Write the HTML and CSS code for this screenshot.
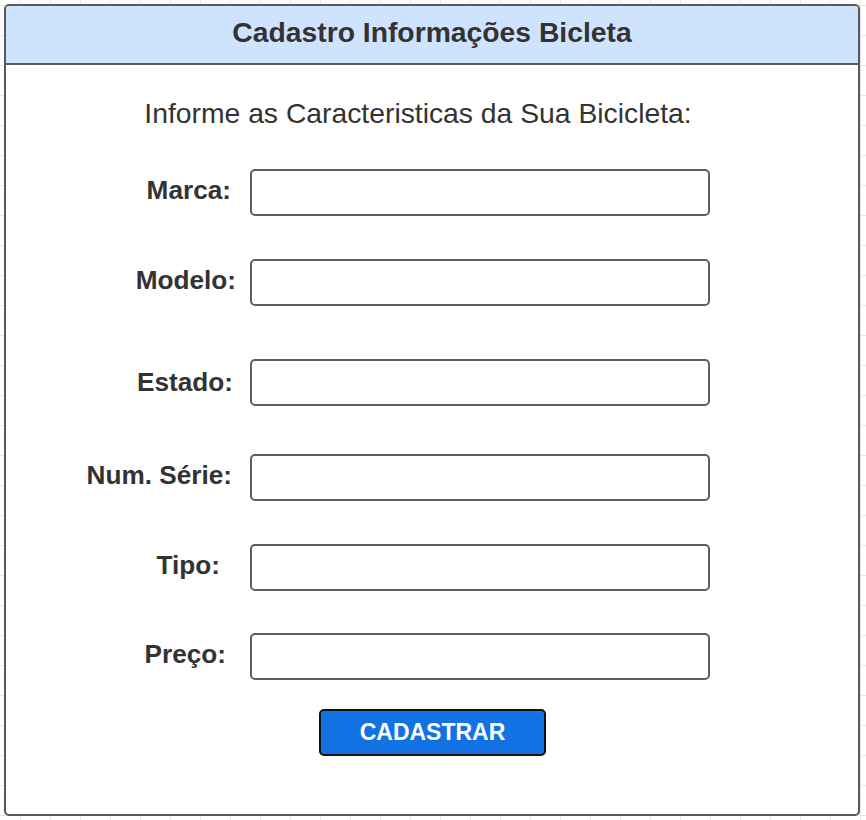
FILE: index.html
```html
<!DOCTYPE html>
<html lang="pt">
<head>
<meta charset="utf-8">
<title>Cadastro Informações Bicleta</title>
<link rel="stylesheet" href="styles.css">
</head>
<body>
  <div class="panel">
    <div class="panel-header">Cadastro Informações Bicleta</div>
    <div class="panel-body">
      <p class="subtitle">Informe as Caracteristicas da Sua Bicicleta:</p>
      <form class="form">
        <div class="row row-marca">
          <label class="label">Marca:</label>
          <input class="field" type="text">
        </div>
        <div class="row row-modelo">
          <label class="label">Modelo:</label>
          <input class="field" type="text">
        </div>
        <div class="row row-estado">
          <label class="label">Estado:</label>
          <input class="field" type="text">
        </div>
        <div class="row row-serie">
          <label class="label">Num. Série:</label>
          <input class="field" type="text">
        </div>
        <div class="row row-tipo">
          <label class="label">Tipo:</label>
          <input class="field" type="text">
        </div>
        <div class="row row-preco">
          <label class="label">Preço:</label>
          <input class="field" type="text">
        </div>
        <button class="submit" type="button">CADASTRAR</button>
      </form>
    </div>
  </div>
</body>
</html>
```
FILE: styles.css
```css
html, body {
  margin: 0;
  padding: 0;
  min-height: 100%;
}

body {
  width: 866px;
  height: 820px;
  overflow: hidden;
  background-color: #ffffff;
  background-image:
    linear-gradient(to right, #e8e8e8 1px, transparent 1px),
    linear-gradient(to bottom, #e8e8e8 1px, transparent 1px);
  background-size: 30px 30px;
  background-position: 20px 5px;
  font-family: "Liberation Sans", Arial, sans-serif;
  color: #333333;
}

.panel {
  box-sizing: border-box;
  margin: 4px 0 0 4px;
  width: 856px;
  height: 812px;
  border: 2px solid #595959;
  border-radius: 5px;
  background: #ffffff;
  display: flex;
  flex-direction: column;
  overflow: hidden;
}

.panel-header {
  box-sizing: border-box;
  height: 59px;
  flex: none;
  background: #cfe3ff;
  border-bottom: 2px solid #595959;
  display: flex;
  align-items: center;
  justify-content: center;
  font-weight: bold;
  font-size: 28.3px;
  color: #333333;
  padding-bottom: 4px;
}

.panel-body {
  display: flex;
  flex-direction: column;
}

.subtitle {
  margin: 31px 0 0 0;
  padding-right: 28px;
  text-align: center;
  font-size: 28.3px;
  line-height: 34px;
  color: #333333;
}

.form {
  display: flex;
  flex-direction: column;
  margin: 0;
}

.row {
  display: flex;
  align-items: center;
  gap: 14px;
  height: 46px;
  margin-top: 44px;
}

.label {
  box-sizing: border-box;
  width: 230px;
  text-align: right;
  font-weight: bold;
  font-size: 26.2px;
  line-height: 30px;
  margin-bottom: 5px;
  color: #333333;
}

.field {
  box-sizing: border-box;
  width: 460px;
  height: 47px;
  border: 2px solid #5e5e5e;
  border-radius: 5px;
  background: #ffffff;
  margin: 0;
  padding: 0 8px;
}

.row-marca { margin-top: 39px; }
.row-marca .label { padding-right: 5px; }
.row-estado { margin-top: 54px; }
.row-estado .label { padding-right: 3px; margin-bottom: 0; }
.row-serie { margin-top: 49px; }
.row-serie .label { padding-right: 4px; }
.row-tipo .label { padding-right: 16px; }
.row-preco { margin-top: 43px; }
.row-preco .label { padding-right: 10px; }

.submit {
  box-sizing: border-box;
  align-self: flex-start;
  margin: 30px 0 0 313px;
  width: 227px;
  height: 47px;
  background: #1271e3;
  border: 2px solid #111111;
  border-radius: 5px;
  color: #ffffff;
  font-family: "Liberation Sans", Arial, sans-serif;
  font-weight: bold;
  font-size: 23px;
  padding: 0;
}
```
